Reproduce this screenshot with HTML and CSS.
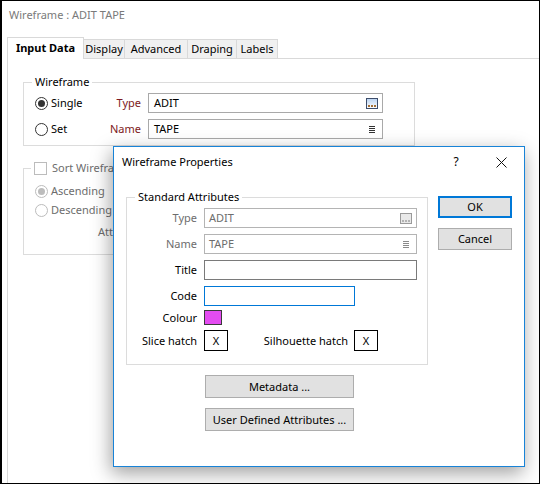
FILE: index.html
```html
<!DOCTYPE html>
<html lang="en">
<head>
<meta charset="utf-8">
<title>Wireframe : ADIT TAPE</title>
<link rel="stylesheet" href="styles.css">
</head>
<body>
<div class="window">
  <div class="win-title">Wireframe : ADIT TAPE</div>
  <div class="tabs">
    <div class="tab tab-input active">Input Data</div>
    <div class="tab tab-display">Display</div>
    <div class="tab tab-advanced">Advanced</div>
    <div class="tab tab-draping">Draping</div>
    <div class="tab tab-labels">Labels</div>
  </div>
  <div class="panel">
    <div class="group group-wf">
      <span class="legend">Wireframe</span>
      <div class="wf-row">
        <span class="opt"><span class="radio on"></span>Single</span>
        <span class="flabel">Type</span>
        <div class="textbox tb-main">
          <span class="tb-text">ADIT</span>
          <svg class="ico-browse" width="12" height="11" viewBox="0 0 12 11">
            <defs><linearGradient id="bg1" x1="0" y1="0" x2="0" y2="1"><stop offset="0" stop-color="#b9d2f0"/><stop offset="1" stop-color="#ffffff"/></linearGradient></defs>
            <rect x="0.5" y="0.5" width="11" height="10" fill="url(#bg1)" stroke="#3d4d6b"/>
            <rect x="2" y="7" width="2" height="2" fill="#a26f36"/>
            <rect x="5" y="7" width="2" height="2" fill="#a26f36"/>
            <rect x="8" y="7" width="2" height="2" fill="#a26f36"/>
          </svg>
        </div>
      </div>
      <div class="wf-row">
        <span class="opt"><span class="radio"></span>Set</span>
        <span class="flabel">Name</span>
        <div class="textbox tb-main">
          <span class="tb-text">TAPE</span>
          <svg class="ico-list" width="6" height="7" viewBox="0 0 6 7">
            <rect x="0" y="0" width="6" height="1" fill="#333"/>
            <rect x="0" y="2" width="6" height="1" fill="#333"/>
            <rect x="0" y="4" width="6" height="1" fill="#333"/>
            <rect x="0" y="6" width="6" height="1" fill="#333"/>
          </svg>
        </div>
      </div>
    </div>

    <div class="group group-sort">
      <span class="legend legend-check"><span class="check"></span>Sort Wireframes</span>
      <div class="sort-row"><span class="radio dis on"></span>Ascending</div>
      <div class="sort-row"><span class="radio dis"></span>Descending</div>
      <div class="sort-row att">Attribute</div>
    </div>
  </div>

  <div class="dialog">
    <div class="dlg-titlebar">
      <span class="dlg-title">Wireframe Properties</span>
      <span class="dlg-help">?</span>
      <span class="dlg-close">
        <svg width="11" height="11" viewBox="0 0 11 11"><path d="M0.5 0.5 L10.5 10.5 M10.5 0.5 L0.5 10.5" stroke="#111" stroke-width="1" fill="none"/></svg>
      </span>
    </div>
    <div class="dlg-body">
      <div class="dlg-main">
        <div class="group group-std">
          <span class="legend">Standard Attributes</span>
          <div class="std-row">
            <span class="slabel dim">Type</span>
            <div class="textbox tb-dis tb-wide">
              <span class="tb-text">ADIT</span>
              <svg class="ico-browse" width="12" height="11" viewBox="0 0 12 11">
                <rect x="0.5" y="0.5" width="11" height="10" fill="#e9e9e9" stroke="#9a9a9a"/>
                <rect x="2" y="7" width="2" height="2" fill="#b3b3b3"/>
                <rect x="5" y="7" width="2" height="2" fill="#b3b3b3"/>
                <rect x="8" y="7" width="2" height="2" fill="#b3b3b3"/>
              </svg>
            </div>
          </div>
          <div class="std-row">
            <span class="slabel dim">Name</span>
            <div class="textbox tb-dis tb-wide">
              <span class="tb-text">TAPE</span>
              <svg class="ico-list ico-list-dis" width="6" height="7" viewBox="0 0 6 7">
                <rect x="0" y="0" width="6" height="1" fill="#8a8a8a"/>
                <rect x="0" y="2" width="6" height="1" fill="#8a8a8a"/>
                <rect x="0" y="4" width="6" height="1" fill="#8a8a8a"/>
                <rect x="0" y="6" width="6" height="1" fill="#8a8a8a"/>
              </svg>
            </div>
          </div>
          <div class="std-row">
            <span class="slabel">Title</span>
            <div class="textbox tb-edit tb-wide"></div>
          </div>
          <div class="std-row">
            <span class="slabel">Code</span>
            <div class="textbox tb-focus tb-code"></div>
          </div>
          <div class="std-row row-colour">
            <span class="slabel">Colour</span>
            <span class="swatch"></span>
          </div>
          <div class="std-row row-hatch">
            <span class="slabel">Slice hatch</span>
            <span class="hatch">X</span>
            <span class="sil">
              <span class="sil-label">Silhouette hatch</span>
              <span class="hatch">X</span>
            </span>
          </div>
        </div>
        <div class="btn btn-wide btn-meta">Metadata ...</div>
        <div class="btn btn-wide btn-uda">User Defined Attributes ...</div>
      </div>
      <div class="dlg-side">
        <div class="btn btn-side btn-default">OK</div>
        <div class="btn btn-side btn-cancel">Cancel</div>
      </div>
    </div>
  </div>
</div>
</body>
</html>
```

FILE: styles.css
```css
html, body {
  margin: 0;
  padding: 0;
  background: #ffffff;
}

body {
  font-family: "Noto Sans", "Open Sans", sans-serif;
  font-size: 11px;
  line-height: 16px;
  color: #000000;
}

.window {
  position: relative;
  width: 540px;
  height: 484px;
  box-sizing: border-box;
  border: 1px solid #000000;
  border-left-width: 2px;
  background: #ffffff;
  overflow: hidden;
  display: flex;
  flex-direction: column;
}

.win-title {
  height: 36px;
  box-sizing: border-box;
  padding: 6px 0 0 7px;
  color: #7a7a7a;
}

/* Tabs */
.tabs {
  margin-left: 5px;
  height: 21px;
  border-bottom: 1px solid #d9d9d9;
  display: flex;
  align-items: flex-end;
}

.tab {
  box-sizing: border-box;
  height: 19px;
  border-top: 1px solid #d9d9d9;
  border-right: 1px solid #d9d9d9;
  background: #f0f0f0;
  text-align: center;
  line-height: 17px;
}

.tab.active {
  height: 22px;
  margin-bottom: -1px;
  border-left: 1px solid #d9d9d9;
  background: #ffffff;
  font-weight: bold;
  line-height: 19px;
}

.tab-input { width: 77px; }
.tab-display { width: 41px; }
.tab-advanced { width: 63px; }
.tab-draping { width: 49px; }
.tab-labels { width: 41px; }

/* Panel */
.panel {
  flex: 1;
  margin-left: 5px;
  border-left: 1px solid #d9d9d9;
  padding: 23px 0 0 15px;
}

.group {
  position: relative;
  box-sizing: border-box;
  border: 1px solid #dcdcdc;
}

.legend {
  position: absolute;
  top: -9px;
  left: 8px;
  padding: 0 3px;
  background: #ffffff;
  line-height: 16px;
  white-space: nowrap;
}

.group-wf {
  width: 392px;
  padding: 10px 0 6px 11px;
}

.wf-row {
  display: flex;
  align-items: center;
  height: 20px;
}

.wf-row + .wf-row {
  margin-top: 6px;
}

.opt {
  width: 70px;
  display: flex;
  align-items: center;
}

.radio {
  width: 13px;
  height: 13px;
  box-sizing: border-box;
  border: 1px solid #333333;
  border-radius: 50%;
  margin-right: 3px;
  display: inline-flex;
  align-items: center;
  justify-content: center;
  flex: none;
}

.radio.on::after {
  content: "";
  width: 7px;
  height: 7px;
  border-radius: 50%;
  background: #333333;
}

.radio.dis {
  border-color: #bcbcbc;
}

.radio.dis.on::after {
  background: #bcbcbc;
}

.flabel {
  width: 36px;
  text-align: right;
  margin-right: 7px;
  color: #7d1a22;
}

.textbox {
  box-sizing: border-box;
  height: 20px;
  border: 1px solid #a9a9a9;
  background: #ffffff;
  display: flex;
  align-items: center;
  padding-left: 5px;
}

.tb-main {
  width: 235px;
  padding-right: 4px;
}

.tb-text {
  flex: 1;
}

.ico-browse {
  display: block;
  margin-top: 1px;
}

.ico-list {
  display: block;
  margin-right: 3px;
  margin-top: 1px;
}

/* Sort group */
.group-sort {
  width: 392px;
  margin-top: 22px;
  padding: 14px 0 14px 11px;
  color: #6d6d6d;
}

.legend-check {
  left: 7px;
  display: flex;
  align-items: center;
}

.check {
  width: 13px;
  height: 13px;
  box-sizing: border-box;
  border: 1px solid #bcbcbc;
  margin-right: 5px;
  background: #ffffff;
}

.sort-row {
  display: flex;
  align-items: center;
  height: 16px;
}

.sort-row + .sort-row {
  margin-top: 3px;
}

.sort-row.att {
  margin-top: 6px;
  padding-left: 63px;
}

/* Dialog */
.dialog {
  position: absolute;
  left: 111px;
  top: 145px;
  width: 412px;
  height: 321px;
  box-sizing: border-box;
  border: 1px solid #1883d7;
  background: #ffffff;
  box-shadow: -2px 6px 18px rgba(0, 0, 0, 0.38);
}

.dlg-titlebar {
  height: 30px;
  display: flex;
  align-items: center;
}

.dlg-title {
  flex: 1;
  padding-left: 8px;
}

.dlg-help {
  width: 44px;
  text-align: center;
  font-size: 12px;
}

.dlg-close {
  width: 46px;
  display: flex;
  justify-content: center;
  align-items: center;
}

.dlg-close svg {
  display: block;
}

.dlg-body {
  display: flex;
  padding: 20px 0 0 12px;
}

.dlg-main {
  width: 302px;
}

.group-std {
  width: 302px;
  padding: 10px 0 13px 0;
}

.std-row {
  display: flex;
  align-items: center;
  height: 20px;
}

.std-row + .std-row {
  margin-top: 6px;
}

.std-row.row-colour {
  margin-top: 4px;
  height: 15px;
}

.std-row.row-hatch {
  margin-top: 5px;
  height: 21px;
}

.slabel {
  width: 70px;
  text-align: right;
  margin-right: 7px;
  flex: none;
}

.slabel.dim {
  color: #6d6d6d;
}

.tb-dis {
  border-color: #b4b4b4;
  color: #6d6d6d;
  padding-left: 4px;
  padding-right: 4px;
}

.tb-wide {
  width: 213px;
}

.tb-edit {
  border-color: #7a7a7a;
}

.tb-focus {
  border-color: #0078d7;
}

.tb-code {
  width: 151px;
}

.swatch {
  width: 18px;
  height: 15px;
  box-sizing: border-box;
  border: 1px solid #3a3a3a;
  background: #e44cf1;
}

.hatch {
  width: 24px;
  height: 21px;
  box-sizing: border-box;
  border: 1px solid #000000;
  display: flex;
  align-items: center;
  justify-content: center;
  flex: none;
}

.sil {
  width: 150px;
  display: flex;
  align-items: center;
  justify-content: flex-end;
}

.sil-label {
  margin-right: 6px;
}

.btn {
  box-sizing: border-box;
  background: #e1e1e1;
  border: 1px solid #adadad;
  display: flex;
  align-items: center;
  justify-content: center;
}

.btn-wide {
  width: 149px;
  height: 23px;
  margin-left: 79px;
}

.btn-meta {
  margin-top: 10px;
}

.btn-uda {
  margin-top: 10px;
}

.dlg-side {
  margin-left: 10px;
  margin-top: -1px;
}

.btn-side {
  width: 74px;
  height: 22px;
}

.btn-default {
  border: 2px solid #0078d7;
}

.btn-cancel {
  margin-top: 10px;
}
```
